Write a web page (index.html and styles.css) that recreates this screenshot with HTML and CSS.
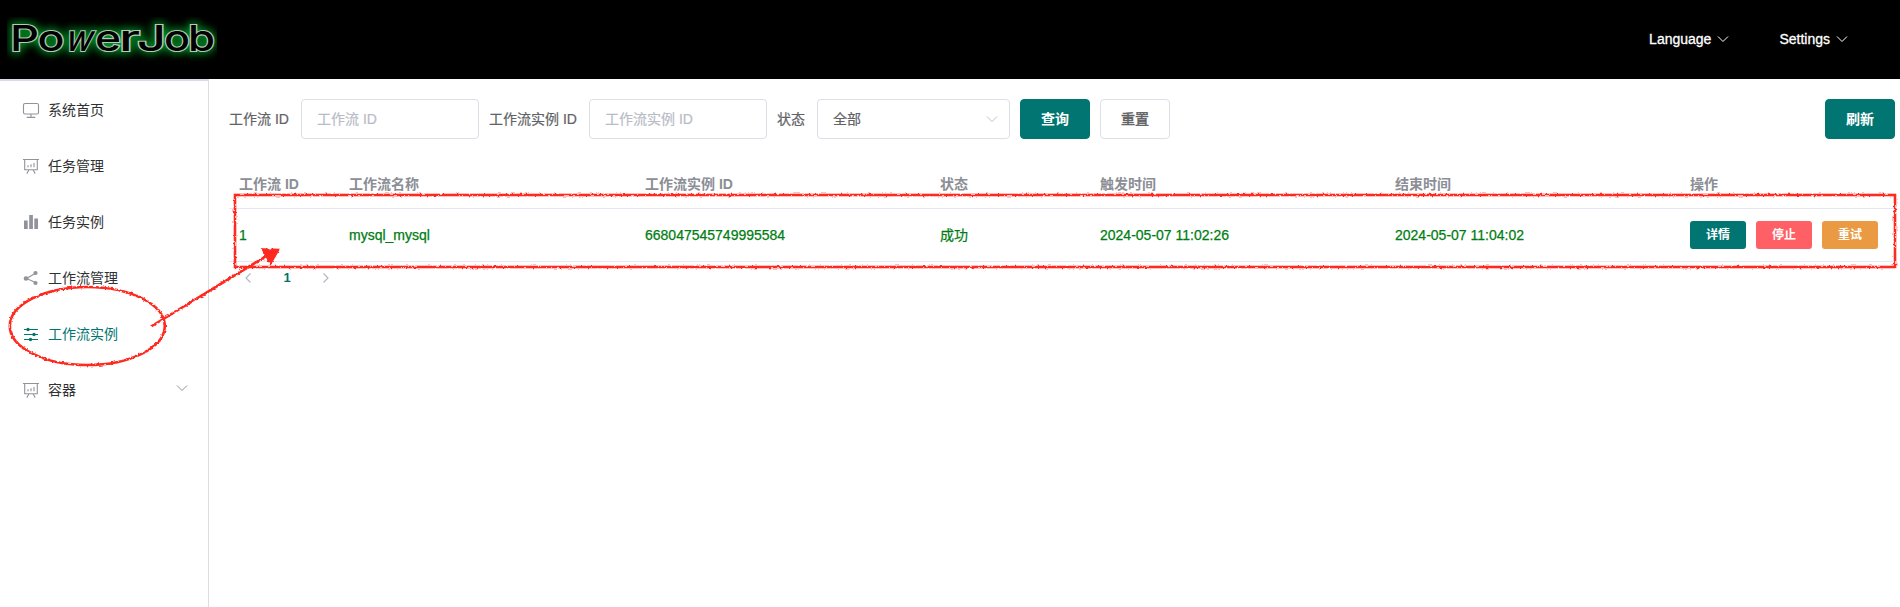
FILE: index.html
```html
<!DOCTYPE html>
<html lang="zh-CN">
<head>
<meta charset="utf-8">
<title>PowerJob</title>
<link rel="stylesheet" href="styles.css">
</head>
<body>
<header class="topbar">
  <svg class="logo" width="210" height="46" viewBox="0 0 210 46" role="img" aria-label="PowerJob">
    <defs>
      <filter id="glow" x="-10%" y="-60%" width="120%" height="220%"><feGaussianBlur stdDeviation="4"/></filter>
      <g id="word">
        <text x="3" y="34" textLength="29" lengthAdjust="spacingAndGlyphs">P</text>
        <text x="30.500" y="34" textLength="27" lengthAdjust="spacingAndGlyphs">o</text>
        <text x="57" y="34" textLength="27" lengthAdjust="spacingAndGlyphs" transform="translate(9 0) skewX(-15)">w</text>
        <text x="88" y="34" textLength="26" lengthAdjust="spacingAndGlyphs">e</text>
        <text x="112" y="34" textLength="21" lengthAdjust="spacingAndGlyphs">r</text>
        <text x="130" y="34" textLength="29" lengthAdjust="spacingAndGlyphs">J</text>
        <text x="157" y="34" textLength="26" lengthAdjust="spacingAndGlyphs">o</text>
        <text x="181" y="34" textLength="27" lengthAdjust="spacingAndGlyphs">b</text>
      </g>
    </defs>
    <use href="#word" class="logo-glow" filter="url(#glow)"/>
    <use href="#word" class="logo-text"/>
  </svg>
  <nav class="topnav">
    <span class="drop">Language <svg class="chev" viewBox="0 0 12 8"><path d="M1 1.500l5 5 5-5"/></svg></span>
    <span class="drop">Settings <svg class="chev" viewBox="0 0 12 8"><path d="M1 1.500l5 5 5-5"/></svg></span>
  </nav>
</header>
<div class="body">
  <aside class="side">
    <a class="item"><svg class="ico" viewBox="0 0 18 18"><rect x="1.500" y="2.500" width="15" height="10.500" rx="1.600"/><path d="M9 13v3M4.700 16.400h8.600"/></svg>系统首页</a>
    <a class="item"><svg class="ico" viewBox="0 0 18 18"><path d="M1 2.500h16M2.700 2.500v10.300h12.600V2.500M6.800 13l-2 3.700M11.200 13l2 3.700M6 8.300v2M9 7.300v3M12 6v4.300"/></svg>任务管理</a>
    <a class="item"><svg class="ico solid" viewBox="0 0 18 18"><path d="M2 7.500h3.700v8.500H2zM7.200 2h3.700v14H7.200zM12.300 5.500H16V16h-3.700z"/></svg>任务实例</a>
    <a class="item"><svg class="ico" viewBox="0 0 18 18"><path d="M13.500 4.200L4.500 9.500l9 4"/><g class="dot"><circle cx="13.500" cy="4" r="2.100"/><circle cx="4" cy="9.500" r="2.300"/><circle cx="13.500" cy="14" r="2.100"/></g></svg>工作流管理</a>
    <a class="item active"><svg class="ico" viewBox="0 0 18 18"><path d="M2 4.500h14M2 9.500h14M2 14.500h14"/><g class="dot"><circle cx="6" cy="4.500" r="1.700"/><circle cx="12" cy="9.500" r="1.700"/><circle cx="8.500" cy="14.500" r="1.700"/></g></svg>工作流实例</a>
    <a class="item"><svg class="ico" viewBox="0 0 18 18"><path d="M1 2.500h16M2.700 2.500v10.300h12.600V2.500M6.800 13l-2 3.700M11.200 13l2 3.700M6 8.300v2M9 7.300v3M12 6v4.300"/></svg>容器<svg class="chev sub" viewBox="0 0 12 8"><path d="M1 1.500l5 5 5-5"/></svg></a>
  </aside>
  <main class="main">
    <form class="filters">
      <label class="label l1">工作流 ID</label><div class="input">工作流 ID</div>
      <label class="label l2">工作流实例 ID</label><div class="input">工作流实例 ID</div>
      <label class="label l3">状态</label>
      <div class="select">全部<svg class="chev" viewBox="0 0 12 8"><path d="M1 1.500l5 5 5-5"/></svg></div>
      <div class="btn primary">查询</div><div class="btn">重置</div><div class="btn primary refresh">刷新</div>
    </form>
    <div class="table">
      <div class="row head"><span>工作流 ID</span><span>工作流名称</span><span>工作流实例 ID</span><span>状态</span><span>触发时间</span><span>结束时间</span><span>操作</span></div>
      <div class="row data"><span>1</span><span>mysql_mysql</span><span>668047545749995584</span><span>成功</span><span>2024-05-07 11:02:26</span><span>2024-05-07 11:04:02</span><span class="ops"><b class="mini">详情</b><b class="mini stop">停止</b><b class="mini retry">重试</b></span></div>
    </div>
    <div class="pager">
      <svg class="arrow" viewBox="0 0 8 12"><path d="M6.500 1.500L2 6l4.500 4.500"/></svg><b class="page">1</b><svg class="arrow" viewBox="0 0 8 12"><path d="M1.500 1.500L6 6l-4.500 4.500"/></svg>
    </div>
  </main>
</div>
<svg class="marks" width="1900" height="607" viewBox="0 0 1900 607">
  <defs><filter id="rough" filterUnits="userSpaceOnUse" x="0" y="180" width="1900" height="200" color-interpolation-filters="sRGB"><feTurbulence type="fractalNoise" baseFrequency="0.350" numOctaves="2" seed="4"/><feDisplacementMap in="SourceGraphic" scale="3" xChannelSelector="R" yChannelSelector="G"/></filter></defs>
  <g filter="url(#rough)">
    <rect x="235" y="195" width="1660" height="72"/>
    <ellipse cx="87.300" cy="326" rx="77.500" ry="39"/>
    <path d="M151 326.500L268 255"/>
    <path class="tip" d="M263 249.500l15 .5-7.500 13z"/>
  </g>
</svg>
</body>
</html>
```
FILE: styles.css
```css
* { box-sizing: border-box; }
body { margin: 0; height: 607px; overflow: hidden; background: #fff; font: 14px/20px "Liberation Sans", "Noto Sans CJK SC", sans-serif; color: #303133; }
.topbar { height: 79px; background: #000; display: flex; align-items: center; justify-content: space-between; padding: 0 52px 0 7px; color: #fff; }
.logo { overflow: hidden; }
.logo text { font: 500 36px Inter, sans-serif; }
.logo-glow { fill: #008c22; stroke: #008c22; stroke-width: 5px; }
.logo-text { fill: #000; stroke: #b5cbb8; stroke-width: 1.1px; paint-order: stroke; stroke-width: 2.2px; }
.topnav { display: flex; gap: 50px; padding-bottom: 1px; }
.drop { display: flex; align-items: center; gap: 6px; -webkit-text-stroke: 0.3px; }
.chev { width: 12px; height: 8px; fill: none; stroke: currentColor; stroke-width: 1; }
.body { display: flex; height: 528px; }
.side { width: 209px; border-right: 1px solid #dcdde0; border-top: 2px solid #d8dae5; padding-top: 1px; }
.item { display: flex; align-items: center; height: 56px; padding: 0 20px 0 22px; }
.ico { width: 18px; height: 18px; margin-right: 8px; fill: none; stroke: #909399; stroke-width: 1.1; }
.solid, .dot { fill: #909399; stroke: none; }
.active { color: #007571; }
.active .ico { stroke: #007571; stroke-width: 1.2; }
.active .dot { fill: #007571; }
.sub { margin-left: auto; margin-bottom: 4px; color: #909399; }
.main { flex: 1; padding: 20px 5px 0 20px; }
.filters { display: flex; height: 40px; line-height: 40px; }
.label { color: #606266; -webkit-text-stroke: 0.2px; }
.l1 { width: 72px; }
.l2 { width: 110px; padding-left: 10px; }
.l3 { width: 50px; padding-left: 10px; }
.input, .select { width: 178px; border: 1px solid #dcdfe6; border-radius: 4px; padding: 0 15px; line-height: 38px; color: #b8bcc6; -webkit-text-stroke: 0.2px; }
.select { width: 193px; color: #606266; display: flex; align-items: center; justify-content: space-between; padding-right: 11px; }
.select .chev { color: #c0c4cc; }
.btn { width: 70px; border: 1px solid #dcdfe6; border-radius: 4px; margin-left: 10px; text-align: center; line-height: 38px; color: #606266; -webkit-text-stroke: 0.5px; }
.primary { background: #007571; border-color: #007571; color: #fff; font-weight: 700; -webkit-text-stroke: 0; }
.refresh { margin-left: auto; }
.table { margin-top: 21px; }
.row { display: grid; grid-template-columns: 110px 296px 295px 160px 295px 295px 1fr; align-items: center; border-bottom: 1px solid #e4e7f1; }
.row > span { padding-left: 10px; }
.head { height: 49px; color: #8b8e95; font-weight: 700; }
.data { height: 53px; color: #007d12; -webkit-text-stroke: 0.25px; }
.ops { display: flex; gap: 10px; -webkit-text-stroke: 0; }
.mini { width: 56px; height: 28px; border-radius: 3px; line-height: 28px; text-align: center; font-size: 12px; color: #fff; background: #007571; }
.stop { background: #ff6065; }
.retry { background: #e99a42; }
.pager { display: flex; align-items: center; gap: 31px; height: 32px; padding-left: 15px; font-size: 13px; color: #007571; }
.page { width: 8px; text-align: center; }
.arrow { width: 8px; height: 12px; fill: none; stroke: #b4b8c0; stroke-width: 1.2; }
.marks { position: absolute; left: 0; top: 0; pointer-events: none; fill: none; stroke: #ff2a1f; stroke-width: 2.6; }
.tip { fill: #ff2a1f; }
```
